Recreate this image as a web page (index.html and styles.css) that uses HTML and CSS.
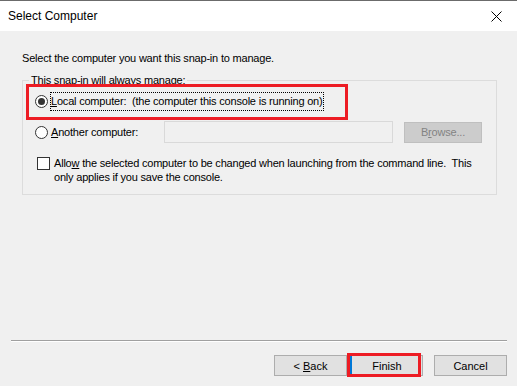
FILE: index.html
```html
<!DOCTYPE html>
<html lang="en">
<head>
  <meta charset="UTF-8" />
  <title>Select Computer</title>
  <link rel="stylesheet" href="styles.css">
</head>
<body>
  <div class="window">
    <div class="titlebar">
      <span class="title">Select Computer</span>
      <svg class="close" width="11" height="11" viewBox="0 0 11 11">
        <path d="M0.5 0.5 L10.5 10.5 M10.5 0.5 L0.5 10.5" stroke="#000" stroke-width="1" fill="none" />
      </svg>
    </div>

    <div class="content">
      <p class="intro">Select the computer you want this snap-in to manage.</p>

      <fieldset class="group">
        <legend>This snap-in will always manage:</legend>

        <div class="row row-local">
          <span class="radio checked"></span>
          <span class="label focused"><u>L</u>ocal computer:&nbsp; (the computer this console is running on)</span>
          <span class="mark mark-local"></span>
        </div>

        <div class="row row-other">
          <span class="radio"></span>
          <span class="label other-label"><u>A</u>nother computer:</span>
          <span class="textbox"></span>
          <span class="btn btn-disabled"><span>B<u>r</u>owse...</span></span>
        </div>

        <div class="row row-check">
          <span class="checkbox"></span>
          <span class="check-text">Allo<u>w</u> the selected computer to be changed when launching from the command line.&nbsp; This only applies if you save the console.</span>
        </div>
      </fieldset>
    </div>

    <div class="footer">
      <div class="separator"></div>
      <div class="buttons">
        <span class="btn"><span>&lt; <u>B</u>ack</span></span>
        <span class="btn btn-default"><span>Finish</span><span class="mark mark-finish"></span></span>
        <span class="btn btn-cancel"><span>Cancel</span></span>
      </div>
    </div>
  </div>
</body>
</html>
```

FILE: styles.css
```css
body {
  margin: 0;
  font-family: 'Liberation Sans', Arial, sans-serif;
  font-size: 11px;
  color: #000;
}

.window {
  height: 386px;
  display: flex;
  flex-direction: column;
  background: #f0f0f0;
  border-top: 1px solid #6b6b6b;
  box-sizing: border-box;
}

.titlebar {
  height: 30px;
  background: #fff;
  display: flex;
  align-items: center;
  justify-content: space-between;
  padding: 0 15px 0 8px;
}

.title {
  font-size: 12px;
}

.close {
  display: block;
  margin-top: 1px;
}

.content {
  flex: 1;
  padding: 21px 20px 0 22px;
  letter-spacing: -0.2px;
}

.intro {
  margin: 0;
  line-height: 13px;
}

.group {
  margin: 9px 0 0 0;
  padding: 4px 0 10px 6px;
  border: 1px solid #dcdcdc;
  width: 475px;
  box-sizing: border-box;
}

.group legend {
  padding: 0 2px;
  line-height: 13px;
}

.row {
  display: flex;
  align-items: center;
  margin-left: 6px;
  position: relative;
}

.row-local {
  height: 20px;
}

.row-other {
  height: 22px;
  margin-top: 10px;
}

.row-check {
  align-items: flex-start;
  margin-top: 13px;
  margin-left: 8px;
}

.radio {
  width: 11px;
  height: 11px;
  border: 1px solid #333;
  border-radius: 50%;
  background: #fff;
  margin-right: 2px;
  display: flex;
  align-items: center;
  justify-content: center;
  flex-shrink: 0;
}

.radio.checked::after {
  content: "";
  width: 7px;
  height: 7px;
  border-radius: 50%;
  background: #333;
}

.label {
  padding: 3px 1px;
  line-height: 13px;
  white-space: nowrap;
}

.focused {
  outline: 1px dotted #000;
  outline-offset: -1px;
}

.other-label {
  width: 112px;
}

.textbox {
  width: 227px;
  height: 20px;
  border: 1px solid #d9d9d9;
  background: #f0f0f0;
}

.checkbox {
  width: 11px;
  height: 11px;
  border: 1px solid #333;
  background: #fff;
  margin: 1px 4px 0 0;
  flex-shrink: 0;
}

.check-text {
  line-height: 14px;
  width: 428px;
}

.btn {
  display: inline-flex;
  align-items: center;
  justify-content: center;
  box-sizing: border-box;
  width: 73px;
  height: 21px;
  border: 1px solid #adadad;
  background: #e1e1e1;
  position: relative;
  white-space: pre;
}

.btn-disabled {
  width: 78px;
  margin-left: 11px;
  background: #cccccc;
  border-color: #bfbfbf;
  color: #838383;
}

.footer {
  padding: 0 10px 10px 11px;
}

.separator {
  height: 1px;
  background: #a0a0a0;
  border-bottom: 1px solid #fff;
}

.buttons {
  display: flex;
  justify-content: flex-end;
  margin-top: 13px;
}

.btn-default {
  margin-left: 3px;
  border-left: 2px solid #0078d7;
}

.btn-cancel {
  margin-left: 11px;
}

.mark {
  position: absolute;
  border: 3px solid #ed1c24;
  box-sizing: border-box;
  pointer-events: none;
}

.mark-local {
  left: -9px;
  top: -7px;
  width: 322px;
  height: 36px;
}

.mark-finish {
  left: -5px;
  top: -3px;
  width: 74px;
  height: 24px;
}
```
